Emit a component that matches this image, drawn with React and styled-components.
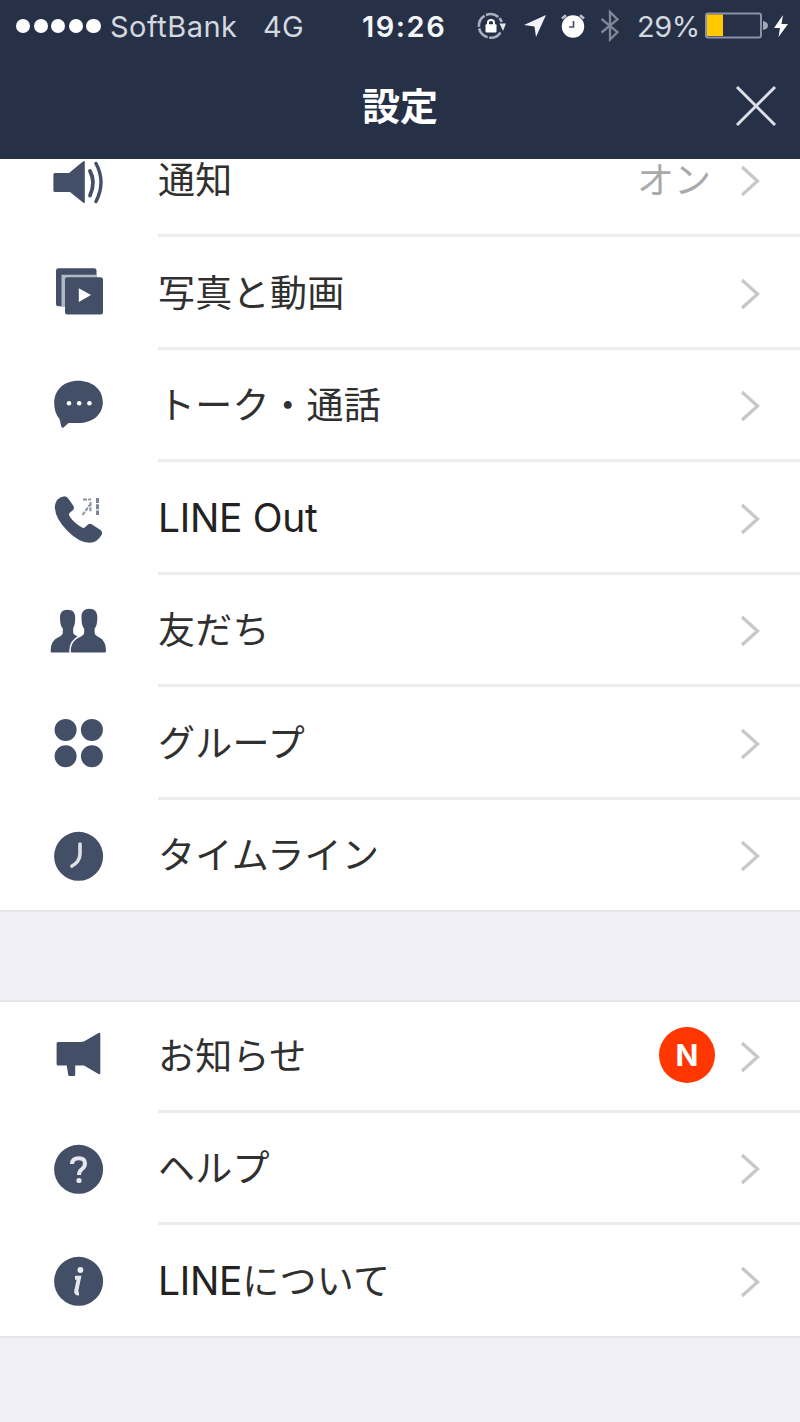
import React from 'react'
import styled, { createGlobalStyle } from 'styled-components'

const INK = "#434e67";

const GlobalStyle = createGlobalStyle`
    * {
        box-sizing: border-box;
    }

    body {
        margin: 0;
        background: #efeff5;
        font-family: Inter, "Liberation Sans", "Noto Sans CJK JP", sans-serif;
    }
`

const SoundIcon = () => (
    <Icon viewBox="0 0 56 56">
        <path d="M5 20H19L33 8.5Q34.8 7.5 34.8 9V49Q34.8 51 33 49.5L20 39H5Q3.4 39 3.4 37.5V21.5Q3.4 20 5 20Z" fill={INK} />
        <path d="M40 18Q46 29 40 42.5" fill="none" stroke={INK} strokeWidth="3.8" strokeLinecap="round" />
        <path d="M46 10.5Q56 29 46 48.5" fill="none" stroke={INK} strokeWidth="3.4" strokeLinecap="round" />
    </Icon>
)

const PhotoIcon = () => (
    <Icon viewBox="0 0 56 56">
        <rect x="6" y="3.2" width="40.5" height="38" rx="2.5" fill={INK} />
        <path d="M11.5 42V9.8H46.5V13H15.5V42Z" fill="#b3b8c5" />
        <rect x="15" y="12.2" width="38" height="37.2" rx="2.5" fill={INK} />
        <path d="M28.8 23.2L41 30L28.8 37Z" fill="#fff" />
    </Icon>
)

const TalkIcon = () => (
    <Icon viewBox="0 0 56 56">
        <path d="M28 2.8C42.5 2.8 52.8 11.5 52.8 24C52.8 37 42.5 45 28 45H18.5L13.5 49.5Q12 50.4 11.3 48.5L9.5 41C6 37 4.2 31.5 4.2 25C4.2 12 14 2.8 28 2.8Z" fill={INK} />
        <g fill="#fff">
            <circle cx="19" cy="25.3" r="2.3" />
            <circle cx="29.2" cy="25.3" r="2.3" />
            <circle cx="39.4" cy="25.3" r="2.3" />
        </g>
    </Icon>
)

const PhoneIcon = () => (
    <Icon viewBox="0 0 56 56">
        <path d="M13.5 6.4Q17 6 19 9.4L23.6 16.2Q24.6 19 22.5 20.5L19.5 23Q18.5 24.5 19.5 26.2Q24 33 32 37.5Q34 38.6 35 37.2L38.4 34.2Q40 33.2 42 34.4L50.5 40Q53 42 51.6 44.8Q47.5 52.6 39.5 52.8Q29 52.6 17.5 41Q4.8 28 4.8 16.5Q6 7.5 13.5 6.4Z" fill={INK} />
        <path d="M32.5 25L40.5 14M33 9.5H41M40.5 12V22" fill="none" stroke="#8a92a3" strokeWidth="2" strokeDasharray="4 1.2" />
        <path d="M47.5 8V25" stroke="#7c8598" strokeWidth="3" strokeDasharray="5 1.2" />
    </Icon>
)

const FriendsIcon = () => (
    <Icon viewBox="0 0 56 56">
        <path d="M17.5 6.8C22.5 6.8 25.2 9.5 25.2 14.5C25.2 20 24.5 23 23.2 25V30C23.5 31.5 26 32.5 28.5 34V49.6H1.5Q0.6 49.6 0.7 48C0.8 40 3.5 36.5 9 34C11.5 32.5 12.8 31.5 12.8 30V25.5C10.8 23.5 10 20 10 14.5C10 9.5 12.5 6.8 17.5 6.8Z" fill={INK} />
        <path d="M39.4 5.8C44.5 5.8 47.3 8.8 47.3 14C47.3 20 46.5 23.5 44.6 25.5V29.5C44.6 31.5 46.5 33 49 34.2C53.5 36.5 56 40.5 56 48Q56 49.6 54.5 49.6H22Q20.7 49.6 20.7 48C21 40.5 24.5 36.5 29.5 34.2C32.5 32.8 34.2 31.5 34.2 29.5V25.5C32.3 23.5 31.5 20 31.5 14C31.5 8.8 34.2 5.8 39.4 5.8Z" fill={INK} stroke="#fff" strokeWidth="3" paintOrder="stroke" />
    </Icon>
)

const GroupIcon = () => (
    <Icon viewBox="0 0 56 56">
        <g fill={INK}>
            <circle cx="15.6" cy="14.9" r="11" />
            <circle cx="41.9" cy="14.9" r="11" />
            <circle cx="15.6" cy="41.3" r="11" />
            <circle cx="41.9" cy="41.3" r="11" />
        </g>
    </Icon>
)

const ClockIcon = () => (
    <Icon viewBox="0 0 56 56">
        <circle cx="28.6" cy="28.3" r="24.5" fill={INK} />
        <path d="M30 16V26Q30 30 27.5 33.5Q25.5 36 22 38" fill="none" stroke="#dfe1e6" strokeWidth="3.6" strokeLinecap="round" />
    </Icon>
)

const MegaphoneIcon = () => (
    <Icon viewBox="0 0 56 56">
        <path d="M8 14H31Q34 14 36.5 12L48.5 5Q50.3 4.2 50.3 6V45Q50.3 47 48.5 46L34 37.5H25.2V47Q25.2 48 24 48H19.5Q18.5 48 18.2 47L16.8 37.5H8Q6.6 37.5 6.6 36V15.5Q6.6 14 8 14Z" fill={INK} />
    </Icon>
)

const HelpIcon = () => (
    <Icon viewBox="0 0 56 56">
        <circle cx="28.6" cy="28.3" r="24.5" fill={INK} />
        <path d="M22 23Q22 17.2 28.8 17.2Q35 17.2 35 22.5Q35 25.5 32 28Q29 30.2 29 34" fill="none" stroke="#e4e7ec" strokeWidth="4" />
        <circle cx="29" cy="39.5" r="2.6" fill="#e4e7ec" />
    </Icon>
)

const InfoIcon = () => (
    <Icon viewBox="0 0 56 56">
        <circle cx="28.6" cy="28.3" r="24.5" fill={INK} />
        <circle cx="30.4" cy="17" r="2.9" fill="#eceef1" />
        <path d="M25 24.8H29L26.2 38Q25.8 40.8 29 40.5" fill="none" stroke="#e4e7ec" strokeWidth="4" />
    </Icon>
)

const MainMenu = [
    { label: "通知", icon: SoundIcon, value: "オン" },
    { label: "写真と動画", icon: PhotoIcon },
    { label: "トーク・通話", icon: TalkIcon },
    { latin: "LINE Out", icon: PhoneIcon },
    { label: "友だち", icon: FriendsIcon },
    { label: "グループ", icon: GroupIcon },
    { label: "タイムライン", icon: ClockIcon },
];

const SubMenu = [
    { label: "お知らせ", icon: MegaphoneIcon, isNew: true },
    { label: "ヘルプ", icon: HelpIcon },
    { latin: "LINE", label: "について", icon: InfoIcon },
];

const StatusBar = () => (
    <StatusWrapper>
        <Signal>
            {Array.from({ length: 5 }).map((_, index) => <SignalDot key={index} />)}
        </Signal>
        <StatusText $spacing="0.5px">SoftBank</StatusText>
        <StatusText $spacing="0.2px">4G</StatusText>
        <StatusText $weight={600} $spacing="1.5px">19:26</StatusText>
        {/* rotation lock */}
        <svg width="32" height="32" viewBox="0 0 32 32">
            <path d="M25.5 22.5A11.8 11.8 0 1 1 26.8 12" fill="none" stroke="#a9b0bd" strokeWidth="2.6" strokeDasharray="13 1.5" />
            <path d="M24.5 13.5H31L28 21Z" fill="#dfe3ea" />
            <rect x="10.5" y="14.2" width="11" height="8.3" rx="1" fill="#fff" />
            <path d="M13 15V12.5Q13 10 16 10Q19 10 19 12.5V15" fill="none" stroke="#fff" strokeWidth="2" />
        </svg>
        {/* location */}
        <svg width="24" height="24" viewBox="0 0 24 24">
            <path d="M23 1L13 23L11.5 12.5L1 11Z" fill="#f2f4f7" />
        </svg>
        {/* alarm */}
        <svg width="28" height="28" viewBox="0 0 28 28">
            <circle cx="14" cy="14.5" r="11.2" fill="#fff" />
            <path d="M3 6.5L7 3.2M25 6.5L21 3.2" stroke="#b9c0cb" strokeWidth="2.6" />
            <path d="M14.5 9V15H10" fill="none" stroke="#4a546a" strokeWidth="1.7" />
        </svg>
        {/* bluetooth */}
        <svg width="22" height="34" viewBox="0 0 22 34">
            <path d="M2.5 10L18.5 23L11 30.5V3L18.5 10.5L2.5 23.5" fill="none" stroke="#7f8899" strokeWidth="2.3" />
        </svg>
        <StatusText $spacing="-0.4px">29%</StatusText>
        <svg width="64" height="28" viewBox="0 0 64 28">
            <rect x="1" y="1.5" width="55" height="24" rx="2" fill="none" stroke="#8a93a3" strokeWidth="2" />
            <rect x="2" y="2.5" width="16" height="21.5" fill="#ffc800" />
            <path d="M58 9Q63 10 63 13.5Q63 17 58 18Z" fill="#a4abb8" />
        </svg>
        <svg width="16" height="24" viewBox="0 0 16 24">
            <path d="M10 1L1 14H7L5.5 23L15 10H8.5Z" fill="#fff" />
        </svg>
    </StatusWrapper>
)

const MenuRow = ({ item }) => {
    const RowIcon = item.icon;

    return (
        <Row>
            <RowIcon />
            <RowBody>
                <Label>{item.latin && <Latin>{item.latin}</Latin>}{item.label}</Label>
                {item.value && <Value>{item.value}</Value>}
                {item.isNew && <Badge>N</Badge>}
                <Chevron viewBox="0 0 20 32">
                    <path d="M2 2L17.5 16L2 30" fill="none" stroke="#c8c8cc" strokeWidth="3.3" />
                </Chevron>
            </RowBody>
        </Row>
    )
}

const App = () => {
    return (
        <Screen>
            <GlobalStyle />

            <Header>
                <StatusBar />
                <TitleBar>
                    <Title>設定</Title>
                    <CloseButton aria-label="閉じる">
                        <svg width="42" height="42" viewBox="0 0 42 42">
                            <path d="M2 2L40 40M40 2L2 40" stroke="#dcdfe5" strokeWidth="3" />
                        </svg>
                    </CloseButton>
                </TitleBar>
            </Header>

            <Content>
                <Section $scrolled>
                    {MainMenu.map((item) => <MenuRow key={item.icon.name} item={item} />)}
                </Section>
                <Section>
                    {SubMenu.map((item) => <MenuRow key={item.icon.name} item={item} />)}
                </Section>
            </Content>
        </Screen>
    )
}

export default App

const Screen = styled.div`

    width: 800px;
    height: 1422px;
    display: flex;
    flex-direction: column;
    overflow: hidden;
    background: #efeff5;

`

const Header = styled.header`

    flex: 0 0 159px;
    display: flex;
    flex-direction: column;
    background: #263148;
    color: #fff;

`

const StatusWrapper = styled.div`

    height: 52px;
    padding-left: 16px;
    display: grid;
    grid-template-columns: 94px 153px 99px 113px 48px 36px 40px 38px 68px 68px 16px;
    align-items: center;

`

const Signal = styled.div`

    display: flex;
    gap: 3.4px;

`

const SignalDot = styled.span`

    width: 14.2px;
    height: 14.2px;
    border-radius: 50%;
    background: #fff;

`

const StatusText = styled.span`

    color: ${(props) => props.$weight ? '#f5f6f8' : '#d3d7de'};
    font-size: 29px;
    font-weight: ${(props) => props.$weight || 400};
    letter-spacing: ${(props) => props.$spacing || '0'};
    line-height: 1;
    white-space: nowrap;

`

const TitleBar = styled.div`

    height: 107px;
    padding: 0 23px;
    display: grid;
    grid-template-columns: 42px 1fr 42px;
    align-items: center;

`

const Title = styled.h1`

    grid-column: 2;
    margin: 0;
    padding-bottom: 3px;
    font-family: "Noto Sans CJK JP", sans-serif;
    font-size: 38px;
    font-weight: 700;
    line-height: 1;
    text-align: center;

`

const CloseButton = styled.button`

    display: flex;
    padding: 0;
    border: none;
    background: none;

`

const Content = styled.main`

    flex: 1;
    min-height: 0;
    overflow: hidden;

`

const Section = styled.section`

    margin-top: ${(props) => props.$scrolled ? '-34.5px' : '88px'};
    background: #fff;
    box-shadow: inset 0 2px #e6e6ea, inset 0 -2px #e4e4e9;

`

const Row = styled.div`

    height: 112.5px;
    padding-left: 50px;
    display: flex;
    align-items: center;

`

const Icon = styled.svg`

    width: 56px;
    height: 56px;
    margin-right: 52px;
    flex-shrink: 0;

`

const RowBody = styled.div`

    flex: 1;
    height: 100%;
    padding: 1px 40px 0 0;
    display: flex;
    align-items: center;
    box-shadow: inset 0 -3px #ececee;

    ${Row}:last-child & {
        box-shadow: none;
    }

`

const Label = styled.span`

    flex: 1;
    color: #303030;
    font-size: 37px;
    letter-spacing: 0.3px;
    line-height: 40px;
    white-space: nowrap;

`

const Latin = styled.span`

    color: #222;
    font-size: 39px;
    letter-spacing: -0.3px;

`

const Value = styled.span`

    margin-right: 29px;
    color: #a9a9a9;
    font-size: 37px;
    line-height: 40px;

`

const Badge = styled.span`

    width: 56px;
    height: 56px;
    margin: -3px 25px 0 0;
    display: flex;
    justify-content: center;
    align-items: center;
    border-radius: 50%;
    background: #ff3600;
    color: #fff;
    font-size: 30px;
    font-weight: 700;

`

const Chevron = styled.svg`

    width: 20px;
    height: 32px;
    flex-shrink: 0;

`
